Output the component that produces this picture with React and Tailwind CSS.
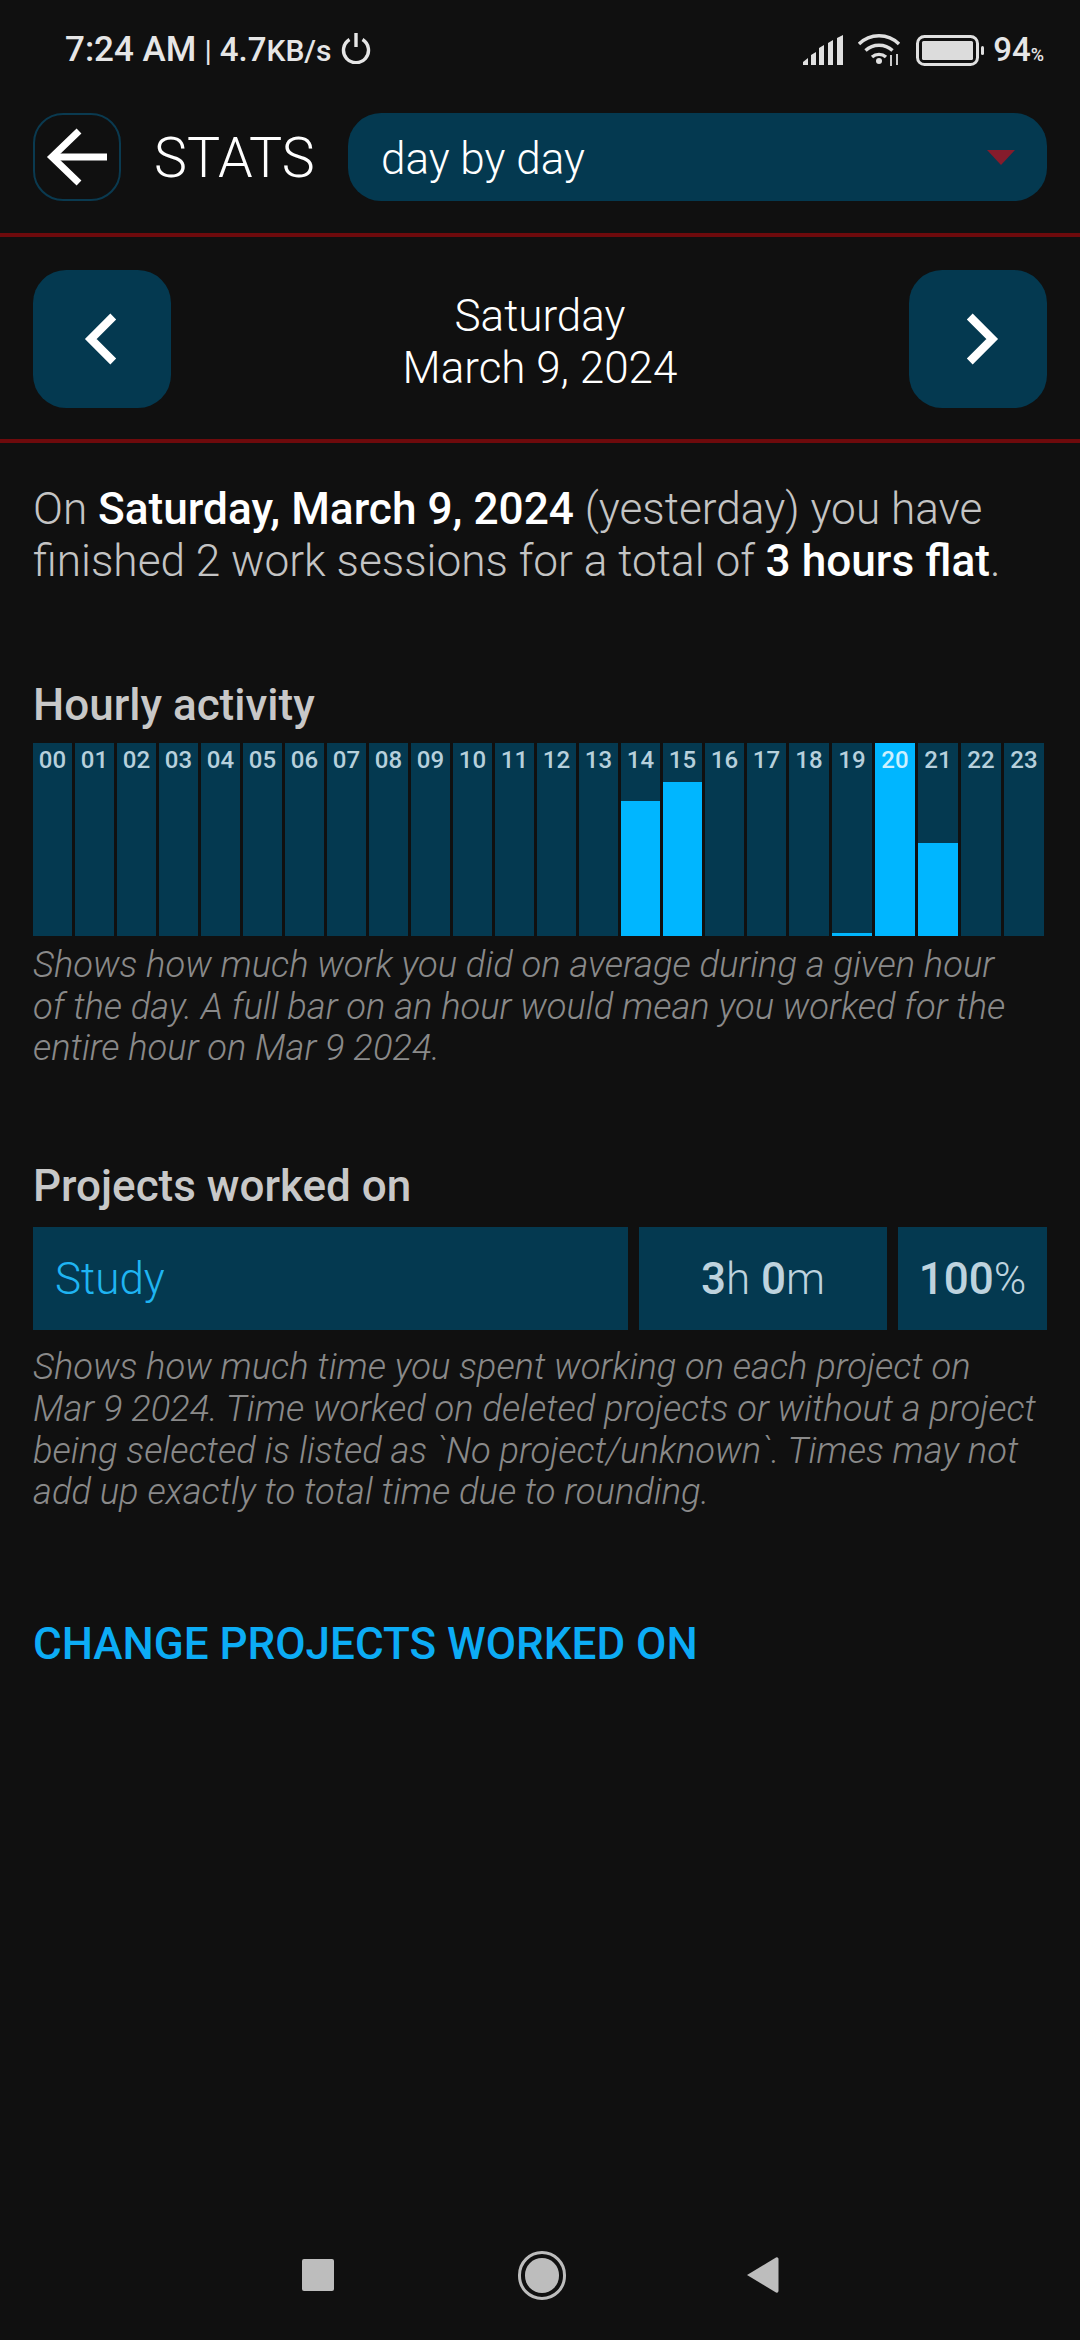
import { ChevronLeft, ChevronRight } from 'lucide-react'

const bars = { 14: 135, 15: 154, 19: 3, 20: 193, 21: 93 }
const hours = Array.from({ length: 24 }, (_, i) => String(i).padStart(2, '0'))

function StatusBar() {
  return (
    <div className="h-[113px] pl-[65px] pr-[36px] pt-[30px] flex items-start justify-between text-[#e6e6e6]">
      <div className="flex items-center h-[40px] font-medium text-[35px] whitespace-nowrap">
        <span>7:24 AM</span>
        <span className="mx-[8px] font-normal text-[30px]">|</span>
        <span className="text-[33px]">4.7<span className="text-[30px]">KB/s</span></span>
        <svg className="ml-[10px] mb-[4px]" width="30" height="32" viewBox="0 0 30 32" fill="none" stroke="#e6e6e6" strokeWidth="3.4">
          <path d="M8.5 7.5a12.5 12.5 0 1 0 13 0" />
          <path d="M15 1v14" />
        </svg>
      </div>
      <div className="flex items-center h-[40px]">
        <svg width="41" height="30" viewBox="0 0 41 30" fill="#e0e0e0">
          <path d="M0 30v-3l5-4v7zM8 30v-10l5-3v13zM16 30V13l5-3v20zM25 30V8l5-3v25zM34 30V3l6-3v30z" />
        </svg>
        <svg className="ml-[13px]" width="44" height="34" viewBox="0 0 44 34" fill="none" stroke="#e0e0e0" strokeWidth="3.4">
          <path d="M2 11c11-11 29-11 40 0" />
          <path d="M8.5 17.5c7.5-7 19.500-7 27 0" />
          <path d="M15 24c4-3.500 10-3.500 14 0" />
          <circle cx="22" cy="28" r="3" fill="#e0e0e0" stroke="none" />
          <path d="M34 22v11M40 21v11" strokeWidth="1.8" />
        </svg>
        <svg className="ml-[15px]" width="68" height="31" viewBox="0 0 68 31">
          <rect x="1.500" y="1.500" width="60" height="28" rx="7" fill="none" stroke="#e0e0e0" strokeWidth="3" />
          <rect x="6" y="6" width="51" height="19" rx="1.500" fill="#dcdcdc" />
          <rect x="65" y="11" width="3" height="9" rx="1.500" fill="#e0e0e0" />
        </svg>
        <span className="ml-[9px] text-[33px] font-medium">94</span>
        <span className="text-[18px] font-medium mt-[8px]">%</span>
      </div>
    </div>
  )
}

function Header() {
  return (
    <div className="h-[124px] px-[33px] flex items-start border-b-[4px] border-[#6e0a0c]">
      <button className="w-[88px] h-[88px] rounded-[30px] border-[2px] border-[#0a3a50] flex items-center justify-center">
        <svg width="62" height="58" viewBox="0 0 62 58" fill="none" stroke="#fff" strokeWidth="7">
          <path d="M33 3L6 29l27 26" />
          <path d="M6 29h55" />
        </svg>
      </button>
      <div className="ml-[33px] w-[161px] h-[88px] pt-[3px] flex items-center text-[55.5px] font-light text-white whitespace-nowrap">STATS</div>
      <div className="ml-[33px] flex-1 h-[88px] rounded-[33px] bg-[#043950] flex items-center justify-between pl-[33px] pr-[32px]">
        <span className="pt-[3px] text-[44px] font-light text-white">day by day</span>
        <span className="w-0 h-0 border-l-[14px] border-r-[14px] border-t-[15px] border-l-transparent border-r-transparent border-t-[#851c2c]" />
      </div>
    </div>
  )
}

function DayNav() {
  return (
    <div className="h-[206px] px-[33px] pt-[33px] flex items-start justify-between border-b-[4px] border-[#6e0a0c]">
      <button className="w-[138px] h-[138px] rounded-[33px] bg-[#043950] flex items-center justify-center">
        <ChevronLeft size={90} color="#fff" strokeWidth={2.2} strokeLinecap="butt" strokeLinejoin="miter" />
      </button>
      <div className="text-center text-[44px] leading-[52px] font-light text-white pt-[20px]">
        <div>Saturday</div>
        <div>March 9, 2024</div>
      </div>
      <button className="w-[138px] h-[138px] rounded-[33px] bg-[#043950] flex items-center justify-center">
        <ChevronRight className="ml-[6px]" size={90} color="#fff" strokeWidth={2.2} strokeLinecap="butt" strokeLinejoin="miter" />
      </button>
    </div>
  )
}

function HourlyChart() {
  return (
    <div className="mt-[12px] h-[193px] grid grid-cols-[repeat(18,39px)_repeat(6,40px)] gap-x-[3px]">
      {hours.map((h, i) => (
        <div key={h} className="relative bg-[#043950] h-full">
          {bars[i] && <div className="absolute bottom-0 inset-x-0 bg-[#00b6ff]" style={{ height: bars[i] }} />}
          <div className={`relative text-center text-[24px] leading-[34px] font-medium ${i === 20 ? 'text-[#cdf0ff]' : 'text-[#b7d0dc]'}`}>{h}</div>
        </div>
      ))}
    </div>
  )
}

export default function App() {
  return (
    <div className="w-[1080px] min-h-[2340px] bg-[#101010] flex flex-col font-['Roboto',sans-serif]">
      <StatusBar />
      <Header />
      <DayNav />

      <main className="px-[33px] flex-1">
        <p className="mt-[40px] text-[44.2px] leading-[52px] font-light text-[#c4c4c4] whitespace-nowrap">
          On <b className="font-medium text-white">Saturday, March 9, 2024</b> (yesterday) you have<br />
          finished 2 work sessions for a total of <b className="font-medium text-white">3 hours flat</b>.
        </p>

        <h2 className="mt-[92px] text-[44px] leading-[52px] font-medium text-[#c8c8c8]">Hourly activity</h2>
        <HourlyChart />
        <p className="mt-[8px] text-[36.3px] leading-[41.7px] font-light italic text-[#8a8a8a] whitespace-nowrap">
          Shows how much work you did on average during a given hour<br />
          of the day. A full bar on an hour would mean you worked for the<br />
          entire hour on Mar 9 2024.
        </p>

        <h2 className="mt-[91px] text-[44px] leading-[52px] font-medium text-[#c8c8c8]">Projects worked on</h2>
        <div className="mt-[15px] h-[103px] flex gap-[11px]">
          <div className="w-[595px] bg-[#043950] flex items-center pl-[22px] text-[44px] font-light text-[#1fb4f2]">Study</div>
          <div className="w-[248px] bg-[#043950] flex items-center justify-center text-[44px] font-light text-[#bed3de]">
            <span><b className="font-medium">3</b>h <b className="font-medium">0</b>m</span>
          </div>
          <div className="w-[149px] bg-[#043950] flex items-center justify-center text-[44px] font-light text-[#bed3de]">
            <span><b className="font-medium">100</b>%</span>
          </div>
        </div>
        <p className="mt-[16px] text-[36.3px] leading-[41.7px] font-light italic text-[#8a8a8a] whitespace-nowrap">
          Shows how much time you spent working on each project on<br />
          Mar 9 2024. Time worked on deleted projects or without a project<br />
          being selected is listed as `No project/unknown`. Times may not<br />
          add up exactly to total time due to rounding.
        </p>

        <div className="mt-[105px] text-[44px] leading-[52px] font-medium text-[#0cacf5]">CHANGE PROJECTS WORKED ON</div>
      </main>

      <div className="h-[130px] pt-[41px] flex justify-center items-start">
        <div className="w-[32px] h-[32px] mt-[8px] rounded-[2px] bg-[#bdbdbd]" />
        <div className="ml-[184px] w-[48px] h-[49px] rounded-full border-[3px] border-[#bdbdbd] flex items-center justify-center">
          <div className="w-[34px] h-[35px] rounded-full bg-[#bdbdbd]" />
        </div>
        <svg className="ml-[180px] mt-[4px]" width="33" height="40" viewBox="0 0 33 40" fill="#bdbdbd">
          <path d="M1 20L30 2.500a1.800 1.800 0 0 1 2.500 1.500v32a1.800 1.800 0 0 1-2.500 1.500z" />
        </svg>
      </div>
    </div>
  )
}
